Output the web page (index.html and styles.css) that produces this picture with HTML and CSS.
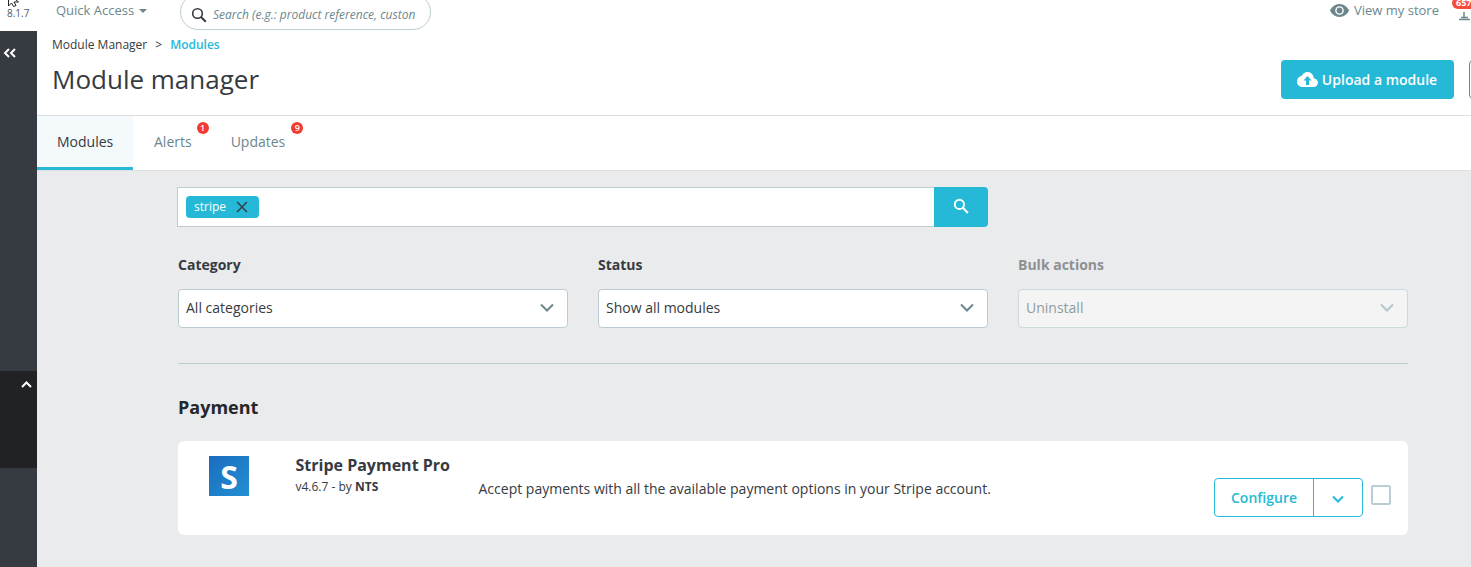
FILE: index.html
```html
<!DOCTYPE html>
<html lang="en">
<head>
<meta charset="utf-8">
<title>Module manager</title>
<link rel="stylesheet" href="styles.css">
</head>
<body>
<header class="topbar">
  <svg class="cursor" width="14" height="9" viewBox="0 0 14 9"><path d="M1.500-6v12l3-3 2 3.500 2.500-1-2-3.500h4.500z" fill="#fff" stroke="#222" stroke-width="1"/></svg>
  <span class="version">8.1.7</span>
  <span class="quick">Quick Access<i class="caret"></i></span>
  <div class="search">
    <svg class="search-icon" width="16" height="16" viewBox="0 0 16 16"><circle cx="6.500" cy="6.500" r="4.800" fill="none" stroke="#363a41" stroke-width="1.600"/><path d="M10 10l4.800 4.800" stroke="#363a41" stroke-width="2"/></svg>
    <span class="search-text">Search (e.g.: product reference, custon</span>
  </div>
  <div class="top-right">
    <svg class="eye" width="19" height="13" viewBox="0 0 19 13"><path d="M9.500 0C5 0 1.500 3 0 6.500 1.500 10 5 13 9.500 13S17.500 10 19 6.500C17.500 3 14 0 9.500 0z" fill="#6c868e"/><circle cx="9.500" cy="6.500" r="4.300" fill="#fff"/><circle cx="9.500" cy="6.500" r="2.900" fill="#6c868e"/></svg>
    <span class="store">View my store</span>
    <span class="bell">
      <svg width="12" height="21" viewBox="0 0 12 21"><path d="M6 12v5M3 17.500h7M1 19.500h11" stroke="#6c868e" stroke-width="1.500" fill="none"/></svg>
      <b class="bell-badge">657</b>
    </span>
  </div>
</header>
<div class="shell">
  <aside class="sidebar">
    <svg class="collapse" width="14" height="10" viewBox="0 0 14 10"><path d="M6 1L2 5l4 4M12 1L8 5l4 4" fill="none" stroke="#fff" stroke-width="2"/></svg>
    <div class="side-panel">
      <svg class="panel-up" width="11" height="7" viewBox="0 0 11 7"><path d="M1 6l4.500-4.500L10 6" fill="none" stroke="#fff" stroke-width="2"/></svg>
    </div>
  </aside>
  <main class="main">
    <section class="page-head">
      <div class="head-left">
        <nav class="crumbs"><span>Module Manager</span><span class="sep">&gt;</span><span class="current">Modules</span></nav>
        <h1 class="title">Module manager</h1>
      </div>
      <div class="head-actions">
        <button class="upload">
          <svg width="21" height="15" viewBox="0 0 21 15"><path d="M16.800 6.200C16.500 2.700 13.800 0 10.500 0 7.800 0 5.500 1.700 4.600 4.100 2 4.500 0 6.700 0 9.500 0 12.500 2.400 15 5.300 15h11.200c2.500 0 4.500-2 4.500-4.500 0-2.200-1.800-4-4.200-4.300z" fill="#fff"/><path d="M10.500 4l-4 4.500h2.500V13h3V8.500h2.500z" fill="#25b9d7"/></svg>
          Upload a module
        </button>
        <span class="clipped-btn"></span>
      </div>
    </section>
    <nav class="tabs">
      <a class="tab active">Modules</a>
      <a class="tab tab-alerts">Alerts<b class="dot">1</b></a>
      <a class="tab tab-updates">Updates<b class="dot">9</b></a>
    </nav>
    <section class="content">
      <div class="searchbar">
        <div class="tag-input"><span class="tag">stripe<svg width="12" height="12" viewBox="0 0 11 11"><path d="M1 1l9 9M10 1l-9 9" stroke="#363a41" stroke-width="1.300"/></svg></span></div>
        <button class="search-btn"><svg width="16" height="16" viewBox="0 0 15 15"><circle cx="6" cy="6" r="4.300" fill="none" stroke="#fff" stroke-width="1.800"/><path d="M9.200 9.200l4.800 4.800" stroke="#fff" stroke-width="2"/></svg></button>
      </div>
      <div class="filters">
        <div class="filter">
          <label class="label">Category</label>
          <div class="select"><span>All categories</span><svg width="14" height="9" viewBox="0 0 14 9"><path d="M1 1.500l6 6 6-6" fill="none" stroke="#6c868e" stroke-width="2"/></svg></div>
        </div>
        <div class="filter">
          <label class="label">Status</label>
          <div class="select"><span>Show all modules</span><svg width="14" height="9" viewBox="0 0 14 9"><path d="M1 1.500l6 6 6-6" fill="none" stroke="#6c868e" stroke-width="2"/></svg></div>
        </div>
        <div class="filter disabled">
          <label class="label">Bulk actions</label>
          <div class="select"><span>Uninstall</span><svg width="14" height="9" viewBox="0 0 14 9"><path d="M1 1.500l6 6 6-6" fill="none" stroke="#b3c7cd" stroke-width="2"/></svg></div>
        </div>
      </div>
      <hr class="rule">
      <h2 class="section">Payment</h2>
      <article class="card">
        <div class="logo"><span>S</span></div>
        <div class="info">
          <div class="name">Stripe Payment Pro</div>
          <div class="ver">v4.6.7 - by <b>NTS</b></div>
        </div>
        <p class="desc">Accept payments with all the available payment options in your Stripe account.</p>
        <div class="actions">
          <div class="split">
            <span class="configure">Configure</span>
            <span class="more"><svg width="12" height="8" viewBox="0 0 12 8"><path d="M1 1.500l5 5 5-5" fill="none" stroke="#25b9d7" stroke-width="2"/></svg></span>
          </div>
          <span class="check"></span>
        </div>
      </article>
    </section>
  </main>
</div>
</body>
</html>
```
FILE: styles.css
```css
* { box-sizing: border-box; }
html, body { margin: 0; height: 567px; overflow: hidden; }
body { font-family: "Open Sans", sans-serif; color: #363a41; background: #eaebec; font-size: 14px; }
button { font-family: inherit; }

.topbar { position: relative; height: 31px; background: #fff; display: flex; align-items: flex-start; overflow: hidden; }
.cursor { position: absolute; left: 7px; top: 0; }
.version { width: 56px; padding: 6px 0 0 7px; font-size: 10px; line-height: 14px; color: #4f5a60; flex: none; }
.quick { flex: none; width: 124px; font-size: 13px; line-height: 20px; color: #6c868e; }
.caret { display: inline-block; margin-left: 5px; vertical-align: 2px; border: 4px solid transparent; border-top-color: #6c868e; border-bottom: 0; }
.search { flex: none; width: 251px; height: 36px; margin-top: -6px; border: 1px solid #bbcdd2; border-radius: 18px; display: flex; align-items: center; padding: 5px 0 0 10px; gap: 6px; overflow: hidden; }
.search-icon { flex: none; }
.search-text { font-size: 12px; font-style: italic; color: #6c868e; white-space: nowrap; overflow: hidden; }
.top-right { margin-left: auto; display: flex; align-items: flex-start; }
.eye { margin: 4px 5px 0 0; }
.store { font-size: 13px; line-height: 20px; color: #6c868e; margin-right: 13px; }
.bell { position: relative; width: 19px; height: 21px; display: block; }
.bell svg { position: absolute; left: 6px; top: 0; }
.bell-badge { position: absolute; left: 0; top: -3px; min-width: 24px; height: 12px; border-radius: 6px; background: #f54c3e; color: #fff; font-size: 9px; line-height: 12px; padding-left: 4px; }

.shell { display: flex; height: 536px; }
.sidebar { position: relative; flex: none; width: 37px; background: #363a41; }
.collapse { position: absolute; left: 3px; top: 17px; }
.side-panel { position: absolute; left: 0; right: 0; top: 340px; height: 97px; background: #202226; }
.panel-up { position: absolute; left: 21px; top: 10px; }

.main { flex: 1; min-width: 0; overflow: hidden; }
.page-head { height: 85px; background: #fff; border-bottom: 1px solid #dfdfdf; display: flex; justify-content: space-between; padding: 0 0 0 15px; }
.crumbs { display: flex; padding-top: 6px; font-size: 12px; line-height: 16px; color: #363a41; }
.sep { margin: 0 8px; }
.current { color: #25b9d7; font-weight: 600; }
.title { margin: 8px 0 0; font-size: 26px; line-height: 36px; font-weight: 400; color: #363a41; }
.head-actions { display: flex; padding-top: 29px; gap: 15px; width: 190px; flex: none; margin-right: 0; }
.upload { flex: none; width: 173px; height: 39px; display: flex; align-items: center; justify-content: center; gap: 4px; background: #25b9d7; border: 0; border-radius: 4px; color: #fff; font-size: 14px; font-weight: 600; padding: 0 1px 0 0; }
.clipped-btn { flex: none; width: 40px; height: 39px; border: 1px solid #6c868e; border-radius: 4px; }

.tabs { height: 55px; background: #fff; border-bottom: 1px solid #dfdfdf; display: flex; }
.tab { position: relative; height: 54px; padding: 16px 20px 0; font-size: 14px; line-height: 19px; color: #6c868e; }
.tab.active { width: 96px; background: #f4f9fb; color: #363a41; border-bottom: 3px solid #25b9d7; }
.tab-alerts { padding-left: 21px; padding-right: 19px; }
.dot { position: absolute; top: 6px; right: 2px; width: 12px; height: 12px; border-radius: 50%; background: #f43a2f; color: #fff; font-size: 9px; line-height: 12px; text-align: center; font-weight: 600; }
.tab-alerts .dot { right: 2px; }

.content { padding: 16px 63px 0 141px; }
.searchbar { display: flex; height: 40px; margin-left: -1px; width: 811px; }
.tag-input { flex: 1; background: #fff; border: 1px solid #bbcdd2; border-right: 0; padding: 8px; }
.tag { display: inline-flex; align-items: center; gap: 10px; height: 22px; padding: 0 11px 0 8px; background: #25b9d7; color: #fff; border-radius: 4px; font-size: 12px; line-height: 22px; }
.search-btn { flex: none; width: 54px; background: #25b9d7; border: 0; border-radius: 0 4px 4px 0; display: flex; align-items: center; justify-content: center; padding: 0 0 2px; }

.filters { display: flex; gap: 30px; margin-top: 28px; }
.filter { flex: 1; }
.label { display: block; font-size: 14px; line-height: 20px; font-weight: 700; color: #363a41; margin-bottom: 14px; }
.select { height: 39px; background: #fff; border: 1px solid #bbcdd2; border-radius: 4px; display: flex; align-items: center; justify-content: space-between; padding: 0 13px 2px 7px; font-size: 14px; }
.disabled .label { color: #8e8f92; }
.disabled .select { background: #f4f4f4; border-color: #ccd9dd; color: #8f9ba0; }

.rule { border: 0; border-top: 1px solid #bbcdd2; margin: 35px 0 0; }
.section { margin: 31px 0 0; font-size: 18px; line-height: 24px; font-weight: 700; color: #25272b; }
.card { display: flex; height: 94px; margin-top: 22px; background: #fff; border-radius: 6px; position: relative; }
.logo { flex: none; width: 40px; height: 40px; margin: 15px 0 0 31px; background: linear-gradient(135deg, #1a6cbe, #2390d2); color: #fff; display: flex; align-items: center; justify-content: center; font-size: 32px; font-weight: 700; }
.info { flex: none; width: 183px; margin-left: 46.500px; padding-top: 13px; }
.name { font-size: 16px; line-height: 22px; font-weight: 700; }
.ver { font-size: 12px; line-height: 17px; margin-top: 2px; }
.desc { margin: 0; padding-top: 38px; font-size: 14px; line-height: 20px; }
.actions { margin-left: auto; display: flex; align-items: flex-start; padding: 37px 17px 0 0; gap: 8px; }
.split { display: flex; height: 39px; border: 1px solid #25b9d7; border-radius: 4px; color: #25b9d7; }
.configure { width: 99px; text-align: center; font-size: 14px; font-weight: 600; line-height: 37px; border-right: 1px solid #25b9d7; }
.more { width: 48px; display: flex; align-items: center; justify-content: center; padding-top: 3px; }
.check { width: 20px; height: 20px; margin-top: 7px; border: 2px solid #bbcdd2; border-radius: 2px; }
```
